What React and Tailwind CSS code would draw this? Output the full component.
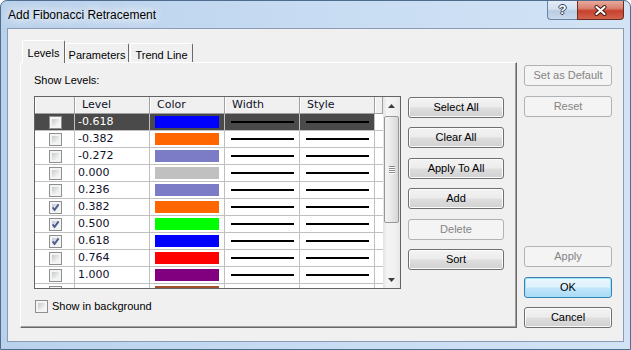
import React from "react"

// last row is only a sliver at the bottom edge of the grid, so it has no label shown
const levels = [
  { value: "-0.618", color: "#0000ff", checked: false, selected: true },
  { value: "-0.382", color: "#ff6600", checked: false },
  { value: "-0.272", color: "#7b7bc6", checked: false },
  { value: "0.000", color: "#c0c0c0", checked: false },
  { value: "0.236", color: "#7b7bc6", checked: false },
  { value: "0.382", color: "#ff6600", checked: true },
  { value: "0.500", color: "#00ff00", checked: true },
  { value: "0.618", color: "#0000ff", checked: true },
  { value: "0.764", color: "#ff0000", checked: false },
  { value: "1.000", color: "#800080", checked: false },
  { value: "", color: "#a0522d", checked: false },
];

const Check = ({ checked }) => (
  <div className="relative h-[13px] w-[13px] shrink-0 border border-[#8e8f8f] bg-[#f4f4f4]">
    <div className="absolute inset-[2px] bg-[linear-gradient(135deg,#c6c9ce,#eeeeef_70%,#f8f8f8)]" />
    { checked &&
      <svg className="absolute inset-0" width="11" height="11" viewBox="0 0 11 11">
        <path d="M2.6 5.4 L4.6 7.9 L8.6 2.4" fill="none" stroke="#4b5c8f" strokeWidth="1.8" />
      </svg>
    }
  </div>
);

const Button = ({ children, disabled, primary, className = "" }) => {
  let look = "border-[#707070] bg-[linear-gradient(#f3f3f3_0%,#ececec_48%,#dedede_52%,#d1d1d1_100%)] text-black shadow-[inset_0_0_0_1px_#fbfbfb]";
  if (disabled) look = "border-[#b0b3b6] bg-[#f4f4f4] text-[#848484]";
  if (primary) look = "border-[#3c7fb1] bg-[linear-gradient(#ecf7fd_0%,#ddf1fc_48%,#c2e7fc_52%,#a9daf5_100%)] text-black shadow-[inset_0_0_0_1px_#9fe2fb]";
  return (
    <div className={ `flex h-[21px] items-center justify-center rounded-[3px] border text-[11px] leading-none ${ look } ${ className }` }>
      { children }
    </div>
  );
};

const LineCell = ({ dark }) => (
  <div className={ `flex w-[75px] shrink-0 items-center border-r border-[#c0c0c0] pl-[6px] pr-[5px] ${ dark ? "bg-[#4a4a4a]" : "" }` }>
    <div className="h-[2px] w-full bg-black" />
  </div>
);

const Row = ({ level }) => {
  const dark = level.selected;
  return (
    <div className="flex h-[17px] shrink-0 border-b border-[#c0c0c0]">
      <div className={ `flex w-[40px] shrink-0 items-center justify-center border-r border-[#c0c0c0] pl-[1px] ${ dark ? "bg-[#4a4a4a]" : "" }` }>
        <Check checked={ level.checked } />
      </div>
      <div className={ `flex w-[75px] shrink-0 items-center border-r border-[#c0c0c0] pl-[3px] text-[11px] ${ dark ? "bg-[#4a4a4a] text-white" : "text-[#10102a]" }` }>
        { level.value }
      </div>
      <div className={ `flex w-[75px] shrink-0 items-center border-r border-[#c0c0c0] px-[5px] ${ dark ? "bg-[#4a4a4a]" : "" }` }>
        <div className="h-[12px] w-full" style={ { background: level.color } } />
      </div>
      <LineCell dark={ dark } />
      <LineCell dark={ dark } />
    </div>
  );
};

const HeadCell = ({ children, w }) => (
  <div className={ `flex ${ w } shrink-0 items-center border-r border-[#a0a0a0] pl-[7px] text-[11px] text-[#10102a] shadow-[inset_1px_0_0_#ffffff]` }>
    { children }
  </div>
);

const Arrow = ({ up }) => (
  <svg width="7" height="4" viewBox="0 0 7 4">
    <polygon points={ up ? "3.5,0 7,4 0,4" : "0,0 7,0 3.5,4" } fill="#3c3c3c" />
  </svg>
);

const Scrollbar = () => (
  <div className="flex w-[17px] flex-col bg-[linear-gradient(to_right,#e3e3e3,#f5f5f5_25%,#f0f0f0_70%,#e8e8e8)]">
    <div className="flex h-[17px] items-center justify-center">
      <Arrow up />
    </div>
    <div className="mx-[1px] mt-[2px] flex h-[107px] flex-col items-center justify-center gap-[1px] rounded-[2px] border border-[#979797] bg-[linear-gradient(to_right,#f4f4f4,#e9e9e9_50%,#d6d6d6)]">
      { [0, 1, 2, 3].map(i =>
        <div key={ i } className="h-px w-[6px] bg-[#8a8a8a] shadow-[0_1px_0_#ffffff]" />
      ) }
    </div>
    <div className="flex-1" />
    <div className="flex h-[17px] items-center justify-center">
      <Arrow />
    </div>
  </div>
);

const LevelsGrid = () => (
  <div className="flex h-[193px] w-[367px] border border-[#646464] bg-white font-['DejaVu_Sans',sans-serif]">
    <div className="flex w-[348px] flex-col overflow-hidden">
      <div className="flex h-[17px] shrink-0 border-b border-[#a0a0a0] bg-[#f0f0f0]">
        <HeadCell w="w-[40px]" />
        <HeadCell w="w-[75px]">Level</HeadCell>
        <HeadCell w="w-[75px]">Color</HeadCell>
        <HeadCell w="w-[75px]">Width</HeadCell>
        <HeadCell w="w-[75px]">Style</HeadCell>
        <HeadCell w="w-[8px]" />
      </div>
      { levels.map((level, i) => <Row key={ i } level={ level } />) }
    </div>
    <Scrollbar />
  </div>
);

const Tabs = () => (
  <div className="ml-[2px] flex h-[22px] items-end">
    <div className="relative z-10 -mb-px flex h-[23px] w-[43px] items-start justify-center rounded-t-[2px] border-l border-t border-r border-l-white border-t-white border-r-[#696969] bg-[#f0f0f0] pt-[4px] text-[11px]">
      Levels
    </div>
    <div className="flex h-[19px] w-[64px] items-start justify-center rounded-t-[2px] border-l border-t border-r border-l-white border-t-white border-r-[#696969] pt-[3px] text-[11px]">
      Parameters
    </div>
    <div className="ml-[1px] flex h-[19px] w-[63px] items-start justify-center rounded-t-[2px] border-l border-t border-r border-l-white border-t-white border-r-[#696969] pt-[3px] text-[11px]">
      Trend Line
    </div>
  </div>
);

const LevelsPanel = () => (
  <div className="flex h-[266px] border border-l-white border-t-white border-r-[#696969] border-b-[#696969] pl-[13px] shadow-[inset_-1px_-1px_0_#a0a0a0]">
    <div className="flex flex-col pt-[11px]">
      <div className="h-[13px] text-[11px] leading-[13px]">Show Levels:</div>
      <div className="mt-[9px]">
        <LevelsGrid />
      </div>
      <div className="mt-[11px] flex items-center gap-[4px] pl-px">
        <Check />
        <span className="text-[11px] leading-[13px]">Show in background</span>
      </div>
    </div>
    <div className="ml-[7px] flex w-[96px] flex-col pt-[34px]">
      <Button>Select All</Button>
      <Button className="mt-[9px]">Clear All</Button>
      <Button className="mt-[10px]">Apply To All</Button>
      <Button className="mt-[9px]">Add</Button>
      <Button className="mt-[10px]" disabled>Delete</Button>
      <Button className="mt-[9px]">Sort</Button>
    </div>
  </div>
);

const TitleButtons = () => (
  <div className="flex items-start self-start">
    <div className="flex h-[19px] w-[30px] items-center justify-center rounded-bl-[4px] border border-r-0 border-t-0 border-[#6a84a4] bg-[linear-gradient(#e3ecf6_0%,#d2e0ef_45%,#b9cce3_55%,#c9d9ec_100%)] text-[13px] font-bold text-white [text-shadow:0_0_1px_#32465e,1px_0_0_#32465e,-1px_0_0_#32465e,0_1px_0_#32465e,0_-1px_0_#32465e]">
      ?
    </div>
    <div className="flex h-[19px] w-[47px] items-center justify-center rounded-br-[4px] border border-t-0 border-[#6b2c22] bg-[linear-gradient(#e9a99b_0%,#d98272_40%,#c6412c_55%,#d2624c_100%)]">
      <svg width="13" height="11" viewBox="0 0 13 11">
        <path d="M2.5 2 L10.5 9 M10.5 2 L2.5 9" stroke="#3b1610" strokeWidth="4" strokeLinecap="round" />
        <path d="M2.5 2 L10.5 9 M10.5 2 L2.5 9" stroke="#ffffff" strokeWidth="2.2" strokeLinecap="round" />
      </svg>
    </div>
  </div>
);

export default function App() {
  return (
    <div className="h-[350px] w-[631px] font-['Liberation_Sans',sans-serif] text-black">
      <div className="flex h-full w-full flex-col overflow-hidden rounded-t-[7px] border border-[#4f6c8c] bg-[linear-gradient(to_right,#b9d1eb,#c6dbf2_45%,#d2e3f5)]">

        <div className="flex h-[27px] shrink-0 items-center justify-between pl-[7px] pr-[6px]">
          <div className="text-[12px] text-black [text-shadow:0_0_8px_#ffffff,0_0_12px_#ffffff,0_0_16px_#ffffff]">
            Add Fibonacci Retracement
          </div>
          <TitleButtons />
        </div>

        <div className="mx-[6px] mb-[7px] flex flex-1 border border-[#8a9cb3] bg-[#f0f0f0] pb-[13px] pl-[12px] pr-[10px] pt-[11px]">
          <div className="flex w-[497px] flex-col">
            <Tabs />
            <LevelsPanel />
          </div>
          <div className="ml-[7px] flex w-[88px] flex-col">
            <Button className="mt-[25px]" disabled>Set as Default</Button>
            <Button className="mt-[10px]" disabled>Reset</Button>
            <div className="flex-1" />
            <Button disabled>Apply</Button>
            <Button className="mt-[10px]" primary>OK</Button>
            <Button className="mt-[9px]">Cancel</Button>
          </div>
        </div>

      </div>
    </div>
  );
}
